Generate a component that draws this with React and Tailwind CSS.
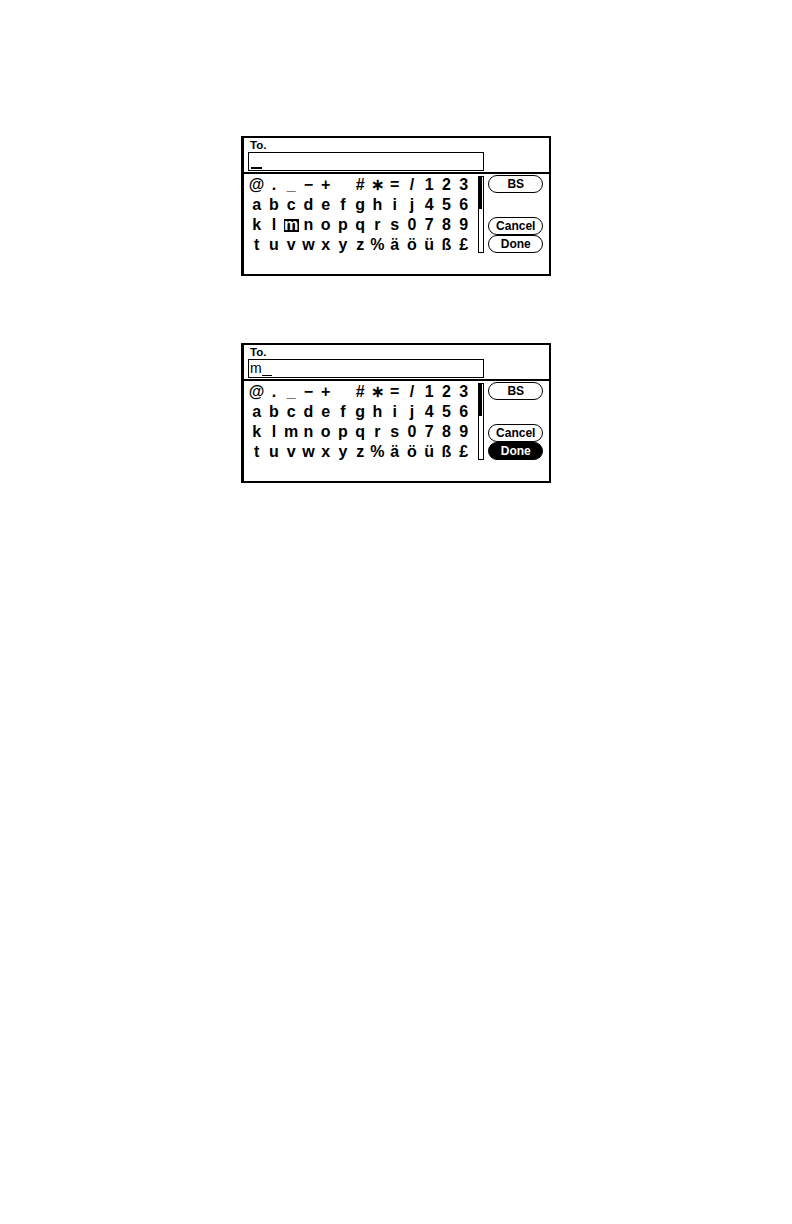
const ROWS = [
  ["@", ".", "_", "−", "+", "", "#", "∗", "=", "/", "1", "2", "3"],
  ["a", "b", "c", "d", "e", "f", "g", "h", "i", "j", "4", "5", "6"],
  ["k", "l", "m", "n", "o", "p", "q", "r", "s", "0", "7", "8", "9"],
  ["t", "u", "v", "w", "x", "y", "z", "%", "ä", "ö", "ü", "ß", "£"],
];

function Pill({ label, active }) {
  return (
    <div
      className={
        "h-[18px] w-[55px] rounded-full border border-black flex items-center justify-center text-[12px] font-bold leading-none " +
        (active ? "bg-black text-white" : "bg-white text-black")
      }
    >
      {label}
    </div>
  );
}

function Keyboard({ typed, selected, doneActive }) {
  return (
    <div className="w-[310px] h-[140px] border-2 border-l-[3px] border-black flex flex-col bg-white">
      {/* Title + entry field */}
      <div className="pl-[6px] mt-[1px] text-[11.5px] font-bold leading-[12px]">To.</div>
      <div className="ml-[4px] mt-[1px] w-[236px] h-[19px] border border-black flex items-end pl-[1px]">
        {typed ? (
          <div className="flex items-end">
            <span className="text-[14px] leading-[16px] mb-[1px]">{typed}</span>
            <span className="w-[10px] h-px bg-black mb-[1px]" />
          </div>
        ) : (
          <span className="w-[11px] h-[2px] bg-black mb-px ml-px" />
        )}
      </div>
      <div className="mt-[1px] h-[2px] bg-black" />

      <div className="flex">
        {/* Character grid */}
        <div className="pl-[4px] mt-px flex flex-col">
          {ROWS.map((row, r) => (
            <div key={r} className="flex h-[20px]">
              {row.map((ch, c) => (
                <div
                  key={c}
                  className="w-[17.25px] flex items-center justify-center text-[16px] font-bold leading-[20px]"
                >
                  {selected && ch === selected ? (
                    <span className="inline-block w-[15px] h-[13px] bg-black text-white leading-[12px] text-center">
                      {ch}
                    </span>
                  ) : (
                    ch
                  )}
                </div>
              ))}
            </div>
          ))}
        </div>

        {/* Scrollbar */}
        <div className="ml-[6px] mt-[2px] w-[6px] h-[77px] border border-black">
          <div className="w-[3px] h-[32px] bg-black" />
        </div>

        {/* Buttons */}
        <div className="ml-[4px] mt-[1px] flex flex-col">
          <Pill label="BS" />
          <div className="mt-[24px]">
            <Pill label="Cancel" />
          </div>
          <Pill label="Done" active={doneActive} />
        </div>
      </div>
    </div>
  );
}

export default function App() {
  return (
    <div className="w-[792px] min-h-[1224px] bg-white text-black font-['Liberation_Sans',Arial,sans-serif]">
      <div className="pl-[241px] pt-[136px] flex flex-col gap-[67px]">
        <Keyboard typed="" selected="m" />
        <Keyboard typed="m" doneActive />
      </div>
    </div>
  );
}
